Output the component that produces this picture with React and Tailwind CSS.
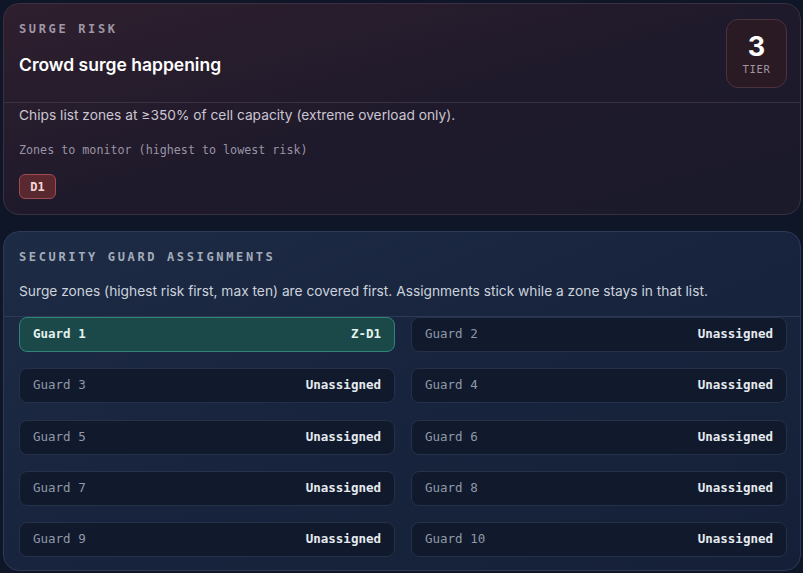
export default function App() {
  const mono = { fontFamily: '"DejaVu Sans Mono", "Liberation Mono", monospace' };
  const guards = [
    { n: 1, z: "Z-D1", active: true },
    { n: 2 }, { n: 3 }, { n: 4 }, { n: 5 }, { n: 6 }, { n: 7 }, { n: 8 }, { n: 9 }, { n: 10 },
  ];
  return (
    <div className="w-[803px] h-[573px] overflow-hidden bg-[#0e1627] pt-[3px] pb-[2px] pl-[3px] pr-[2px] flex flex-col gap-[16px]" style={{ fontFamily: 'Inter, "Noto Sans", sans-serif' }}>
      <div className="rounded-[16px] border border-[#3a2f40] bg-gradient-to-br from-[#2f1f2e] via-[#1f1a2b] to-[#1a1a2b] h-[212px] shrink-0 flex flex-col">
        <div className="flex justify-between items-start pl-[15px] pr-[13px] pt-[15px] pb-[14px] border-b border-[#3a3144]">
          <div className="flex flex-col">
            <div className="text-[12px] leading-[16px] tracking-[0.22em] font-bold text-[#9e97a5] mt-[2px]" style={mono}>SURGE RISK</div>
            <div className="text-[17.5px] leading-[24px] font-semibold text-white mt-[16px]">Crowd surge happening</div>
          </div>
          <div className="w-[61px] h-[69px] rounded-[12px] border border-[#4a3240] bg-[#2a1a24] flex flex-col items-center justify-center">
            <div className="text-[27px] leading-[30px] font-bold text-white">3</div>
            <div className="text-[10.5px] leading-[14px] tracking-[0.06em] text-[#a3959f]" style={mono}>TIER</div>
          </div>
        </div>
        <div className="pl-[15px] pr-[13px] pt-[2px] flex flex-col">
          <div className="text-[13.75px] leading-[20px] text-[#cbc5d2]">Chips list zones at ≥350% of cell capacity (extreme overload only).</div>
          <div className="text-[11.7px] leading-[16px] text-[#9a93a5] mt-[17px]" style={mono}>Zones to monitor (highest to lowest risk)</div>
          <div className="mt-[16px] w-[37px] h-[25px] rounded-[6px] border border-[#a04a52] bg-[#5a2930] flex items-center justify-center text-[12px] font-bold text-[#f2d6d6]" style={mono}>D1</div>
        </div>
      </div>
      <div className="rounded-[16px] border border-[#2c3a55] bg-gradient-to-br from-[#1e2b45] via-[#18243d] to-[#152038] flex-1 flex flex-col overflow-hidden">
        <div className="pl-[15px] pr-[13px] pt-[17px]">
          <div className="text-[12px] leading-[16px] tracking-[0.22em] font-bold text-[#a3acba]" style={mono}>SECURITY GUARD ASSIGNMENTS</div>
          <div className="text-[13.75px] leading-[20px] text-[#cbd2dc] mt-[16px]">Surge zones (highest risk first, max ten) are covered first. Assignments stick while a zone stays in that list.</div>
        </div>
        <div className="border-t border-[#2c3a55] mt-[15px] pl-[15px] pr-[13px] grid grid-cols-2 gap-x-[16px] gap-y-[16.3px]">
          {guards.map((g) => (
            <div
              key={g.n}
              className={
                g.active
                  ? "h-[35px] rounded-[8px] border border-[#2f8677] bg-[#1b4848] flex items-center justify-between px-[13px]"
                  : "h-[35px] rounded-[8px] border border-[#243149] bg-[#111a2c] flex items-center justify-between px-[13px]"
              }
              style={mono}
            >
              <span className={g.active ? "text-[12.5px] font-bold text-[#e3f2ee]" : "text-[12.5px] text-[#8f98a7]"}>Guard {g.n}</span>
              <span className={g.active ? "text-[12.5px] font-bold text-[#e3f2ee]" : "text-[12.5px] font-bold text-[#e6eaf0]"}>{g.z || "Unassigned"}</span>
            </div>
          ))}
        </div>
      </div>
    </div>
  );
}
